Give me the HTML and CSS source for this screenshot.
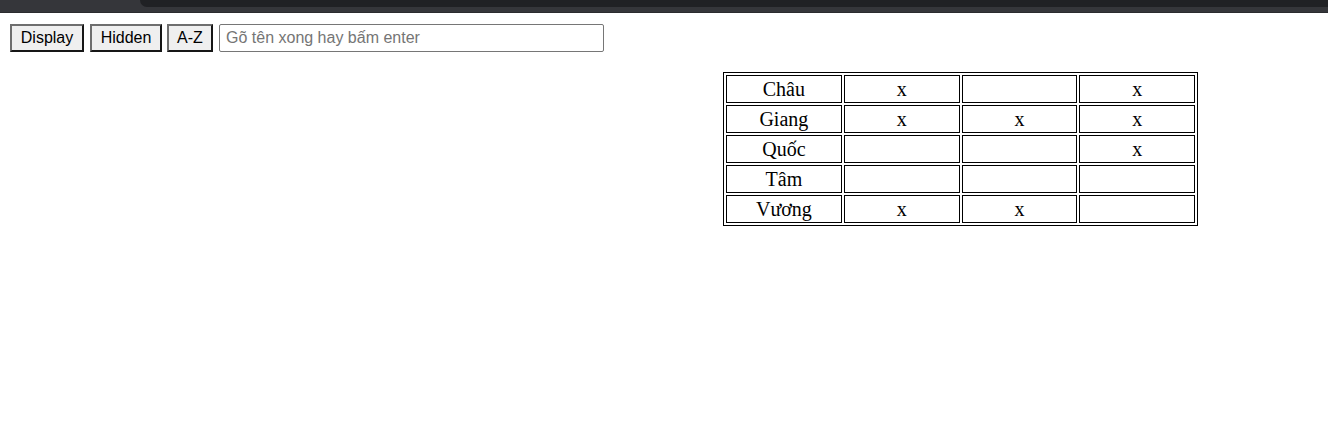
FILE: index.html
```html
<!DOCTYPE html>
<html>
<head>
<meta charset="utf-8">
<link rel="stylesheet" href="styles.css">
</head>
<body>
<div class="chrome"><div class="chrome-tab"></div><div class="chrome-rest"></div></div>
<div class="page">
  <div class="toolbar">
    <button class="btn btn-display">Display</button>
    <button class="btn btn-hidden">Hidden</button>
    <button class="btn btn-az">A-Z</button>
    <input class="search" type="text" placeholder="Gõ tên xong hay bấm enter">
  </div>
  <table class="grid">
    <tr><td>Châu</td><td>x</td><td></td><td>x</td></tr>
    <tr><td>Giang</td><td>x</td><td>x</td><td>x</td></tr>
    <tr><td>Quốc</td><td></td><td></td><td>x</td></tr>
    <tr><td>Tâm</td><td></td><td></td><td></td></tr>
    <tr><td>Vương</td><td>x</td><td>x</td><td></td></tr>
  </table>
</div>
</body>
</html>
```
FILE: styles.css
```css
html, body {
  margin: 0;
  padding: 0;
  background: #ffffff;
}
.chrome {
  display: flex;
  height: 13px;
  background: #35363a;
  border-bottom: 1px solid #2a2b2e;
  box-sizing: border-box;
}
.chrome-tab {
  width: 140px;
}
.chrome-rest {
  flex: 1;
  height: 7px;
  background: #202124;
  border-bottom-left-radius: 8px;
}
.page {
  padding: 10px 10px 8px 10px;
}
.toolbar {
  display: flex;
  align-items: center;
  gap: 5px;
  height: 29px;
}
.btn {
  font-family: "Liberation Sans", Arial, sans-serif;
  font-size: 16px;
  color: #000;
  background: #efefef;
  border-style: solid;
  border-width: 2px;
  border-color: #6e6e6e #161616 #161616 #6e6e6e;
  border-radius: 0;
  padding: 0;
  height: 28px;
  line-height: 18px;
  margin: 0;
  text-align: center;
}
.btn-display { width: 74px; }
.btn-hidden { width: 72px; margin-left: 1px; }
.btn-az { width: 46px; }
.search {
  font-family: "Liberation Sans", Arial, sans-serif;
  font-size: 16px;
  width: 385px;
  height: 28px;
  box-sizing: border-box;
  border: 1px solid #767676;
  border-radius: 2px;
  padding: 1px 6px;
  margin: 0 0 0 1px;
}
.search::placeholder {
  color: #757575;
}
.grid {
  margin: 20px 0 0 713px;
  border: 1px solid #000;
  border-spacing: 2px;
  width: 475px;
  font-family: "Liberation Serif", "Times New Roman", serif;
  font-size: 20px;
}
.grid td {
  border: 1px solid #000;
  padding: 1px;
  height: 24px;
  line-height: 24px;
  text-align: center;
  width: 25%;
}
```
